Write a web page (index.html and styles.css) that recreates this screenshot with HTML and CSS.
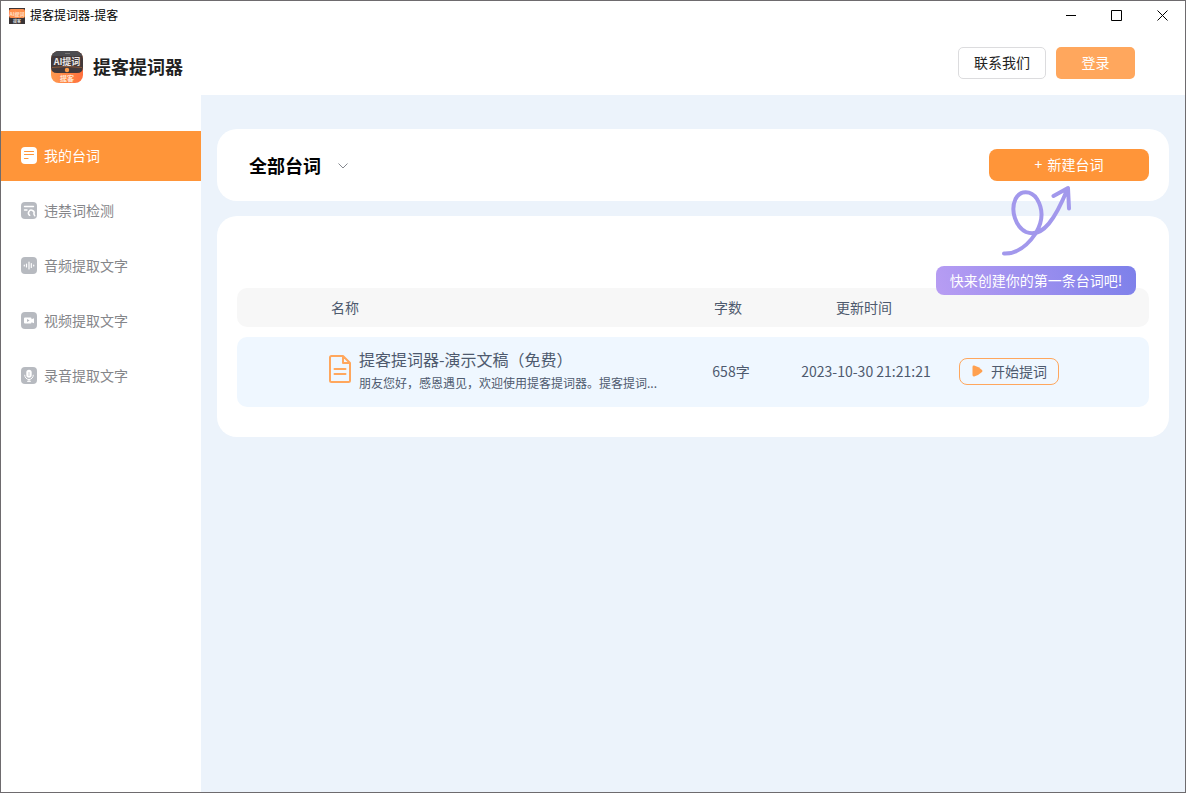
FILE: index.html
```html
<!DOCTYPE html>
<html lang="zh-CN">
<head>
<meta charset="utf-8">
<title>提客提词器-提客</title>
<link rel="stylesheet" href="styles.css">
</head>
<body>
<div class="window">
  <div class="titlebar">
    <svg class="app-icon" viewBox="0 0 16 16" aria-hidden="true">
      <rect width="16" height="16" fill="#3a3436"/>
      <rect y="1" width="16" height="9" rx="2" fill="#ff8f4c"/>
      <text x="8" y="8" class="icon-text" font-size="5" fill="#ffe0c8">AI提词</text>
      <text x="8" y="15" class="icon-text" font-size="4" fill="#ddd">提客</text>
    </svg>
    <span class="window-title">提客提词器-提客</span>
    <div class="window-controls">
      <button type="button" class="window-button" aria-label="最小化"><svg viewBox="0 0 11 11"><path d="M1 5.5h10"/></svg></button>
      <button type="button" class="window-button" aria-label="最大化"><svg viewBox="0 0 11 11"><path d="M.5.5h10v10h-10z"/></svg></button>
      <button type="button" class="window-button" aria-label="关闭"><svg viewBox="0 0 11 11"><path d="M.5.5l10 10M10.500.5l-10 10"/></svg></button>
    </div>
  </div>

  <header class="header">
    <div class="brand">
      <svg class="logo" viewBox="0 0 32 32" aria-hidden="true">
        <defs>
          <clipPath id="logo-shape"><rect width="32" height="32" rx="8"/></clipPath>
          <linearGradient id="logo-orange"><stop stop-color="#ff9a50"/><stop offset="1" stop-color="#ff6f3c"/></linearGradient>
        </defs>
        <g clip-path="url(#logo-shape)">
          <rect width="32" height="32" fill="url(#logo-orange)"/>
          <path d="M0 0h32v16q0 6-6 6H6q-6 0-6-6z" fill="#43393a"/>
          <path d="M0 0h32v5H0z" fill="#4c4c50"/>
          <path d="M14 2.500h5" stroke="#777" stroke-width="1"/>
          <path d="M1 16.500q15-2 30 0" stroke="#8d5a3a" fill="none"/>
          <circle cx="16" cy="19" r="2.200" fill="#ff9a45"/>
        </g>
        <text x="16" y="14" class="icon-text" font-size="9" fill="#e8e5e4">AI提词</text>
        <text x="16" y="30" class="icon-text" font-size="7" fill="#ffe6d4">提客</text>
      </svg>
      <h1 class="brand-name">提客提词器</h1>
    </div>
    <div class="header-actions">
      <button type="button" class="button contact">联系我们</button>
      <button type="button" class="button login">登录</button>
    </div>
  </header>

  <div class="body">
    <nav class="sidebar">
      <a href="#scripts" class="nav-item active" aria-current="page">
        <svg class="nav-icon" viewBox="0 0 16 17"><rect width="16" height="17" rx="4" fill="#fff"/><path d="M3.500 4.500h9M3.500 7.500h9M3.500 11.500h3.500" stroke="#ff9539" stroke-width="1.200" stroke-linecap="round"/></svg>
        我的台词</a>
      <a href="#check" class="nav-item">
        <svg class="nav-icon" viewBox="0 0 16 17"><rect width="16" height="17" rx="4" fill="#b7bac0"/><path d="M3.500 4.500h9M3.500 8h2.500" stroke="#fff" stroke-width="1.400" stroke-linecap="round"/><path d="M8.700 13.300a2.800 2.800 0 1 1 4.200-1.300l.8 1.700" fill="none" stroke="#fff" stroke-width="1.500" stroke-linecap="round"/></svg>
        违禁词检测</a>
      <a href="#audio" class="nav-item">
        <svg class="nav-icon" viewBox="0 0 16 17"><rect width="16" height="17" rx="4" fill="#b7bac0"/><path d="M3.300 8v1M5.500 7v3M8 5v7M10.300 6.500v4M12.700 8v1" stroke="#fff" stroke-width="1.200" stroke-linecap="round"/></svg>
        音频提取文字</a>
      <a href="#video" class="nav-item">
        <svg class="nav-icon" viewBox="0 0 16 17"><rect width="16" height="17" rx="4" fill="#b7bac0"/><path d="M4 5.500h5.500q1 0 1 1v.8l2.500-1.100v5.100l-2.500-1v.3q0 1-1 1H4q-1 0-1-1V6.500q0-1 1-1z" fill="#fff"/><path d="M6 6.900v3.200l2.600-1.600z" fill="#b7bac0"/></svg>
        视频提取文字</a>
      <a href="#record" class="nav-item">
        <svg class="nav-icon" viewBox="0 0 16 17"><rect width="16" height="17" rx="4" fill="#b7bac0"/><rect x="5.300" y="2.800" width="5.400" height="8" rx="2.700" fill="#fff"/><path d="M3.700 8.200a4.300 4.300 0 0 0 8.600 0M8 12.500v2M6.500 14.300h3" fill="none" stroke="#fff" stroke-linecap="round"/><path d="M7 6h2M7 8h2" stroke="#b7bac0" stroke-width=".7"/></svg>
        录音提取文字</a>
    </nav>

    <main class="content">
      <section class="card toolbar">
        <button type="button" class="filter">全部台词
          <svg class="chevron" viewBox="0 0 10 6" aria-hidden="true"><path d="M.5.5L5 5L9.500.5"/></svg>
        </button>
        <button type="button" class="button create"><span>+</span>新建台词</button>
      </section>

      <section class="card list">
        <div class="hint">
          <svg class="hint-arrow" viewBox="0 0 74 74" aria-hidden="true"><path d="M4 69.500C17 70 28 61 36 49C43 37 43 25 37 15C31 6 20 6 15.500 15C10 27 16 43 26 48C43 55 56 33 67.500 5M53.500 12L68 4L69 24.500"/></svg>
          <p class="hint-text">快来创建你的第一条台词吧!</p>
        </div>
        <table class="scripts">
          <colgroup><col class="col-lead"><col class="col-name"><col class="col-count"><col class="col-time"><col class="col-action"></colgroup>
          <thead>
            <tr><th></th><th scope="col" class="name-heading">名称</th><th scope="col">字数</th><th scope="col" class="time-heading">更新时间</th><th></th></tr>
          </thead>
          <tbody>
            <tr>
              <td></td>
              <td>
                <div class="script">
                  <svg class="document" viewBox="0 0 22 28" aria-hidden="true"><path d="M2.500 1H14l7 7v17.500q0 1.500-1.500 1.500h-17Q1 27 1 25.500v-23Q1 1 2.500 1zM14 1v7h7M5.500 14h11M5.500 19h11"/></svg>
                  <div class="script-text">
                    <div class="script-title">提客提词器-演示文稿（免费）</div>
                    <div class="script-preview">朋友您好，感恩遇见，欢迎使用提客提词器。提客提词...</div>
                  </div>
                </div>
              </td>
              <td class="centered count">658字</td>
              <td class="centered">2023-10-30 21:21:21</td>
              <td><button type="button" class="start"><svg class="play" viewBox="0 0 11 12" aria-hidden="true"><path d="M.5 2Q.5 .3 2.200 .6Q7 2 10 5Q11 6 10 7Q7 10 2.200 11.400Q.5 11.700 .5 10Z"/></svg>开始提词</button></td>
            </tr>
          </tbody>
        </table>
      </section>
    </main>
  </div>
</div>
</body>
</html>
```

FILE: styles.css
```css
* { box-sizing: border-box; }

body {
  margin: 0;
  font-family: "Noto Sans CJK SC", sans-serif;
  font-size: 14px;
  line-height: 20px;
  color: #4e5a6e;
}

button {
  margin: 0;
  padding: 0;
  border: 0;
  background: none;
  font: inherit;
  color: inherit;
  cursor: pointer;
}

.window {
  display: flex;
  flex-direction: column;
  min-height: 100vh;
  border: 1px solid #6e6b6e;
  background: #fff;
}

.titlebar {
  display: flex;
  align-items: center;
  height: 29px;
  padding-left: 8px;
  color: #000;
}
.app-icon { width: 16px; height: 16px; }
.icon-text { text-anchor: middle; font-weight: 700; }
.window-title {
  margin-left: 5px;
  padding-bottom: 2px;
  font-size: 12px;
}
.window-controls { display: flex; margin-left: auto; }
.window-button {
  display: flex;
  align-items: center;
  justify-content: center;
  width: 46px;
  height: 29px;
}
.window-button svg {
  width: 11px;
  height: 11px;
  fill: none;
  stroke: #000;
}

.header {
  display: flex;
  align-items: flex-start;
  justify-content: space-between;
  height: 65px;
  padding: 17px 50px 0;
}
.brand {
  display: flex;
  align-items: center;
  gap: 10px;
  padding-top: 4px;
}
.logo { width: 32px; height: 32px; }
.brand-name {
  margin: 0;
  padding-bottom: 2px;
  font-size: 18px;
  line-height: 24px;
  color: #222;
}
.header-actions { display: flex; gap: 10px; }
.button {
  height: 32px;
  padding-bottom: 2px;
  border-radius: 5px;
}
.contact {
  width: 88px;
  border: 1px solid #dcdcde;
  color: #222;
}
.login {
  width: 79px;
  background: #ffa75d;
  color: #fff;
}

.body { display: flex; flex: 1; }
.sidebar {
  display: flex;
  flex: none;
  flex-direction: column;
  gap: 5px;
  width: 200px;
  padding-top: 36px;
}
.nav-item {
  display: flex;
  align-items: center;
  gap: 7px;
  height: 50px;
  padding: 0 0 2px 20px;
  color: #85868a;
  text-decoration: none;
}
.nav-item.active { background: #ff9539; color: #fff; }
.nav-icon { width: 16px; height: 17px; }

.content {
  flex: 1;
  min-width: 0;
  padding: 34px 16px;
  background: #ecf3fb;
}
.card { border-radius: 20px; background: #fff; }
.toolbar {
  display: flex;
  align-items: center;
  justify-content: space-between;
  height: 72px;
  padding: 0 20px 0 32px;
}
.filter {
  display: flex;
  align-items: center;
  gap: 17px;
  font-size: 18px;
  font-weight: 700;
  color: #000;
}
.chevron {
  width: 10px;
  height: 6px;
  margin-top: 2px;
  fill: none;
  stroke: #85888f;
}
.create {
  display: flex;
  align-items: center;
  justify-content: center;
  gap: 5px;
  width: 160px;
  border-radius: 8px;
  background: #ff9539;
  color: #fff;
}

.list {
  position: relative;
  margin-top: 15px;
  padding: 62px 20px 20px;
}
.hint {
  position: absolute;
  top: -32px;
  right: 33px;
  width: 200px;
  pointer-events: none;
}
.hint-arrow {
  display: block;
  width: 74px;
  height: 74px;
  margin: 0 0 8px 64px;
  fill: none;
  stroke: #a298ec;
  stroke-width: 4;
  stroke-linecap: round;
  stroke-linejoin: round;
}
.hint-text {
  margin: 0;
  border-radius: 8px;
  background: linear-gradient(70deg, #b89df3, #7d80ea);
  color: #fff;
  line-height: 29px;
  text-align: center;
}

.scripts {
  width: 100%;
  table-layout: fixed;
  border-collapse: separate;
  border-spacing: 0 10px;
}
.col-lead { width: 92px; }
.col-count { width: 90px; }
.col-time { width: 186px; }
.col-action { width: 190px; }
.scripts th {
  height: 39px;
  padding: 0 0 2px;
  background: #f7f7f7;
  font-weight: 400;
}
.scripts .name-heading { padding-left: 2px; text-align: left; }
.scripts .time-heading { padding-right: 4px; }
.scripts td {
  height: 70px;
  padding: 0 0 2px;
  background: #eff7ff;
}
.scripts .centered { text-align: center; }
.scripts .count { padding-left: 6px; }
.scripts th:first-child, .scripts td:first-child { border-radius: 10px 0 0 10px; }
.scripts th:last-child, .scripts td:last-child { border-radius: 0 10px 10px 0; }

.script { display: flex; align-items: center; gap: 8px; }
.document {
  flex: none;
  width: 22px;
  height: 28px;
  margin-bottom: 4px;
  fill: none;
  stroke: #ffa75d;
  stroke-width: 2;
  stroke-linejoin: round;
  stroke-linecap: round;
}
.script-text { white-space: nowrap; }
.script-title { font-size: 16px; line-height: 24px; }
.script-preview { font-size: 12px; line-height: 24px; }

.start {
  display: flex;
  align-items: center;
  gap: 8px;
  width: 100px;
  height: 27px;
  padding-left: 12px;
  border: 1px solid #ffa75d;
  border-radius: 8px;
}
.play { width: 11px; height: 12px; fill: #ffa04f; }
```
